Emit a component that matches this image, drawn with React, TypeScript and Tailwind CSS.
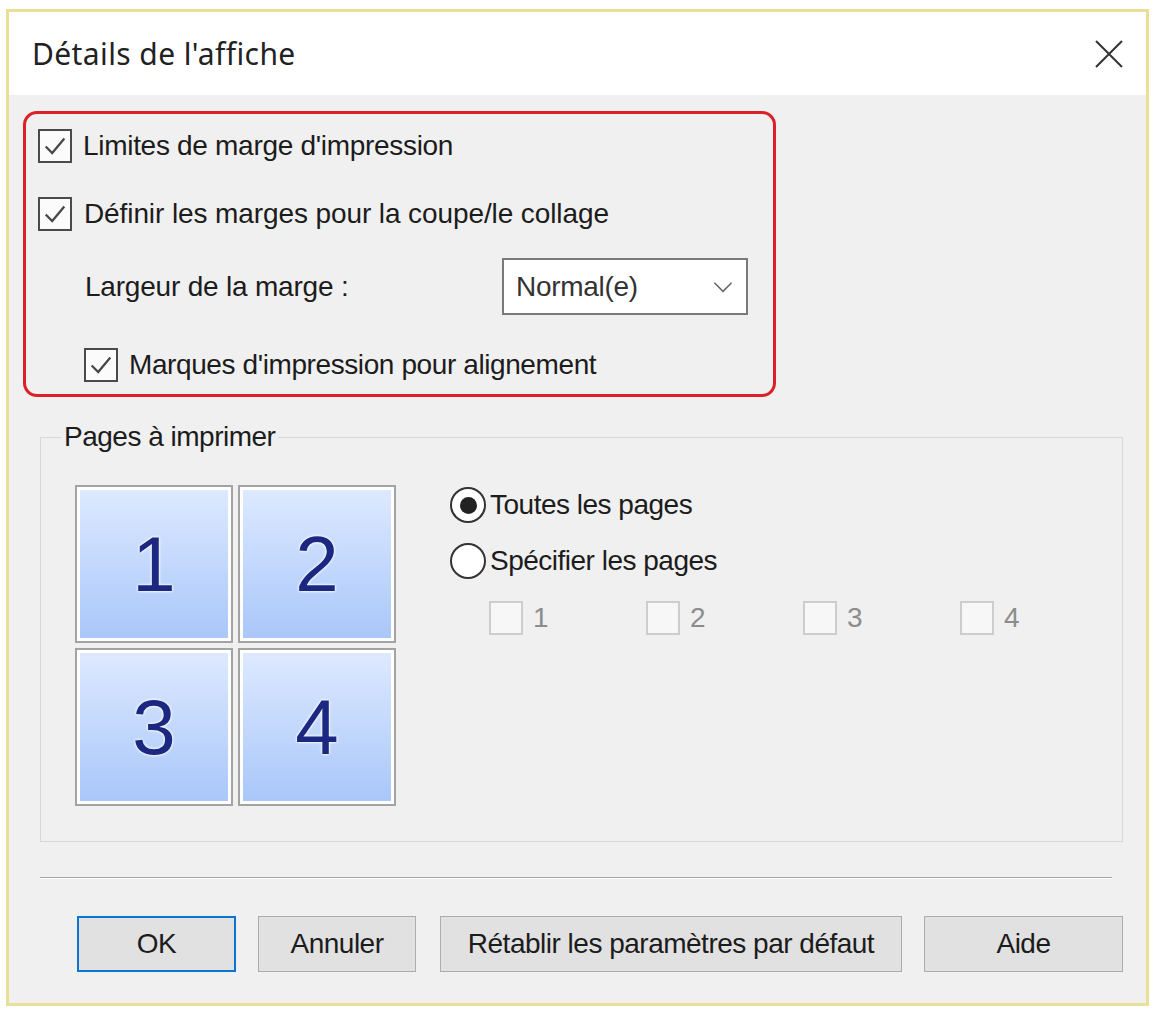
import type { ReactNode } from "react";

const sans = "font-['Liberation_Sans',Arial,sans-serif]";

function CheckBox({ checked, disabled }: { checked?: boolean; disabled?: boolean }) {
  return (
    <span
      className={
        disabled
          ? "flex h-[34px] w-[34px] shrink-0 items-center justify-center border-2 border-[#cdcdcd] bg-[#f7f7f7]"
          : "flex h-[34px] w-[34px] shrink-0 items-center justify-center border-2 border-[#4a4a4a] bg-[#fbfbfb]"
      }
    >
      {checked && (
        <svg viewBox="0 0 30 30" className="h-[28px] w-[28px]" aria-hidden>
          <path d="M5 15.5 L12 22.5 L25 7" fill="none" stroke="#474747" strokeWidth="2.4" />
        </svg>
      )}
    </span>
  );
}

function Radio({ selected, label }: { selected?: boolean; label: string }) {
  return (
    <div className="flex h-[36px] items-center">
      <span className="flex h-[36px] w-[36px] shrink-0 items-center justify-center rounded-full border-2 border-[#333] bg-white">
        {selected && <span className="h-[17px] w-[17px] rounded-full bg-[#222]" />}
      </span>
      <span className="ml-[4px] text-[28px] leading-none tracking-[-0.5px] text-[#1c1c1c]">{label}</span>
    </div>
  );
}

function Tile({ n }: { n: number }) {
  return (
    <div className="h-[158px] w-[158px] border-2 border-[#a3a3a3] bg-white p-[3px]">
      <div className="flex h-full w-full items-center justify-center bg-gradient-to-b from-[#dde9ff] to-[#a9c7f9]">
        <span className="text-[78px] leading-none text-[#1b2780] [text-shadow:0_0_3px_#fff,0_0_3px_#fff]">
          {n}
        </span>
      </div>
    </div>
  );
}

function Button({ children, primary, width }: { children: ReactNode; primary?: boolean; width: string }) {
  return (
    <button
      type="button"
      className={`${width} flex h-[56px] items-center justify-center bg-[#e1e1e1] text-[28px] tracking-[-0.5px] text-[#1c1c1c] ${
        primary ? "border-2 border-[#0a74d0]" : "border border-[#adadad]"
      }`}
    >
      {children}
    </button>
  );
}

export default function App() {
  return (
    <div className={`h-[1015px] w-[1154px] overflow-hidden bg-white pl-[6px] pt-[9px] ${sans}`}>
      <div className="flex h-[997px] w-[1143px] flex-col border-[3px] border-[#eadf97] bg-[#f0f0f0]">
        {/* title bar */}
        <div className="flex h-[83px] shrink-0 items-center justify-between bg-white pl-[23px] pr-[22px]">
          <span className="font-['Noto_Sans',sans-serif] text-[30px] tracking-[0.4px] text-[#222]">Détails de l'affiche</span>
          <svg viewBox="0 0 30 30" className="h-[30px] w-[30px]" aria-hidden>
            <path d="M2 2 L28 28 M28 2 L2 28" stroke="#333" strokeWidth="2" />
          </svg>
        </div>

        {/* highlighted options */}
        <div className="ml-[14px] mt-[16px] h-[286px] w-[753px] rounded-[14px] border-[3px] border-[#dd2027] pl-[12px] pt-[12px]">
          <div className="flex h-[40px] items-center">
            <CheckBox checked />
            <span className="ml-[11px] text-[28px] tracking-[-0.3px] text-[#1c1c1c]">Limites de marge d'impression</span>
          </div>
          <div className="mt-[28px] flex h-[40px] items-center">
            <CheckBox checked />
            <span className="ml-[12px] text-[28px] tracking-[-0.1px] text-[#1c1c1c]">
              Définir les marges pour la coupe/le collage
            </span>
          </div>
          <div className="mt-[24px] flex h-[57px] items-center">
            <span className="ml-[47px] w-[417px] text-[28px] tracking-[-0.2px] text-[#1c1c1c]">Largeur de la marge :</span>
            <div className="flex h-[57px] w-[246px] items-center justify-between border-2 border-[#7a7a7a] bg-white pl-[12px] pr-[12px]">
              <span className="text-[28px] tracking-[-0.3px] text-[#333]">Normal(e)</span>
              <svg viewBox="0 0 24 14" className="h-[12px] w-[22px]" aria-hidden>
                <path d="M2 2 L12 12 L22 2" fill="none" stroke="#666" strokeWidth="1.8" />
              </svg>
            </div>
          </div>
          <div className="ml-[46px] mt-[30px] flex h-[40px] items-center">
            <CheckBox checked />
            <span className="ml-[11px] text-[28px] tracking-[-0.4px] text-[#1c1c1c]">
              Marques d'impression pour alignement
            </span>
          </div>
        </div>

        {/* pages group */}
        <fieldset className="ml-[31px] mt-[26px] h-[419px] w-[1083px] border border-[#d7d7d7]">
          <legend className="ml-[20px] px-[3px] text-[28px] leading-[28px] tracking-[-0.5px] text-[#1c1c1c]">
            Pages à imprimer
          </legend>
          <div className="flex pl-[34px] pt-[34px]">
            <div className="grid grid-cols-[158px_158px] gap-[5px]">
              <Tile n={1} />
              <Tile n={2} />
              <Tile n={3} />
              <Tile n={4} />
            </div>
            <div className="ml-[54px] mt-[2px] flex flex-col">
              <Radio selected label="Toutes les pages" />
              <div className="mt-[20px]">
                <Radio label="Spécifier les pages" />
              </div>
              <div className="ml-[39px] mt-[21px] flex h-[36px] items-center">
                {[1, 2, 3, 4].map((n) => (
                  <div key={n} className="flex w-[157px] items-center">
                    <CheckBox disabled />
                    <span className="ml-[10px] text-[28px] text-[#8c8c8c]">{n}</span>
                  </div>
                ))}
              </div>
            </div>
          </div>
        </fieldset>

        {/* separator */}
        <div className="ml-[31px] mt-[35px] h-[2px] w-[1072px] border-b border-t border-b-white border-t-[#a5a5a5]" />

        {/* buttons */}
        <div className="ml-[68px] mt-[37px] flex">
          <Button primary width="w-[159px]">OK</Button>
          <div className="ml-[22px]">
            <Button width="w-[158px]">Annuler</Button>
          </div>
          <div className="ml-[24px]">
            <Button width="w-[462px]">Rétablir les paramètres par défaut</Button>
          </div>
          <div className="ml-[22px]">
            <Button width="w-[199px]">Aide</Button>
          </div>
        </div>
      </div>
    </div>
  );
}
